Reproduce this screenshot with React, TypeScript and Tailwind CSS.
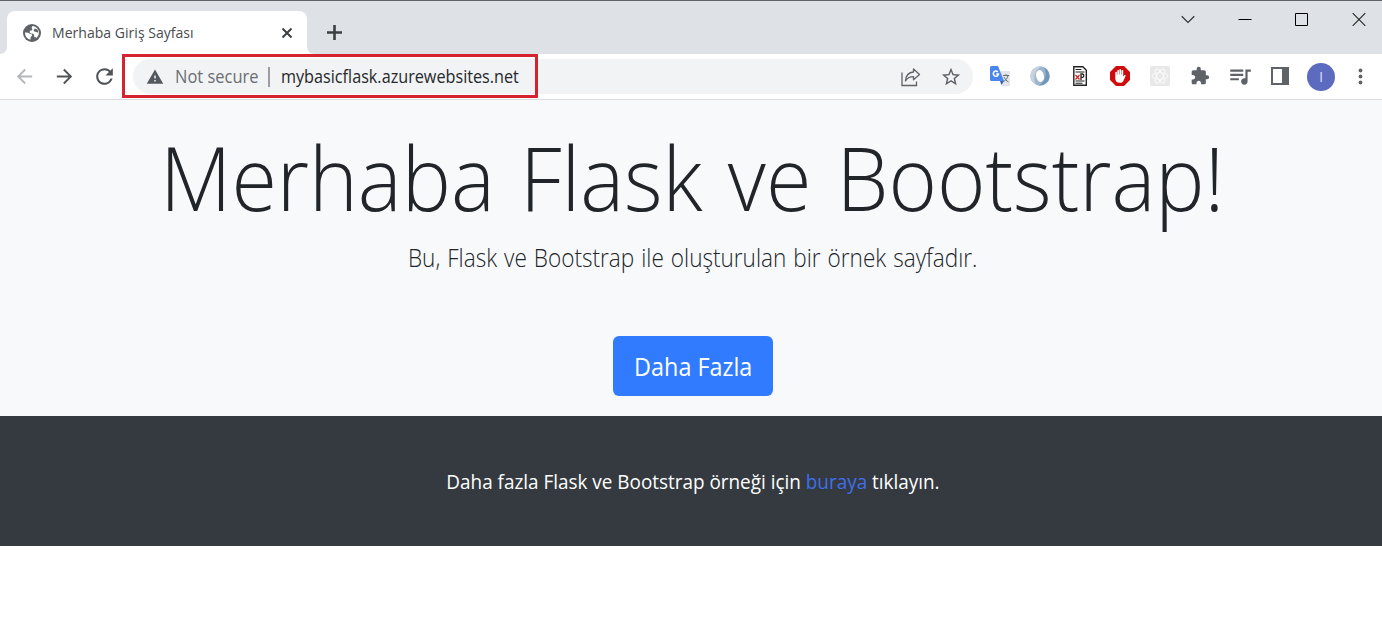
import React from 'react';
import { MdWarning, MdExtension, MdQueueMusic, MdRefresh, MdArrowBack, MdArrowForward, MdStarBorder } from 'react-icons/md';

function TabStrip() {
  return (
    <div className="flex h-[54px] shrink-0 border-t border-[#63646b] bg-[#dee1e6]">
      <svg className="mt-[45px] h-2 w-[7px] shrink-0" viewBox="0 0 7 8" fill="#fff">
        <path d="M7 0v8H0C5 8 7 4 7 0z" />
      </svg>
      <div className="mt-[10px] flex w-[300px] shrink-0 items-center rounded-t-lg bg-white pl-[16px] pr-[13px]">
        <svg className="h-[18px] w-[18px] shrink-0" viewBox="0 0 18 18">
          <circle cx="9" cy="9" r="9" fill="#5f6368" />
          <path d="M2 8.500c2-.3 3.500.1 4.500 1 .9.800 2.700.3 2.700 1.700 0 1-1.200.8-1.500 2L7.400 15.700C4 15 1.900 12 2 8.500zM9.500 2.100c3.800.4 6.400 3.300 6.500 6.500-.2 2.400-1 4-2.600 5.400-.4-.7-1.200-.7-1.900-.9-.9-.3.1-1.300-.5-2.400-.7-1.200-1.200-.9-2.800-1.200-1.500-.3-2-1.500-1.200-2.600.6-.8 2.300-.3 2.400-1.500 0-1-.9-.7-.8-1.600z" fill="#fff" />
          <path d="M11.500 4.500c1.400-.3 1.800 1 3 .9l1 3.200c-1.300.2-1.800-.9-3-.8-1.300.1-2-.8-1.700-1.700.2-.6 1-.8.7-1.600z" fill="#5f6368" />
        </svg>
        <span className="ml-[11px] origin-left scale-x-[.97] whitespace-nowrap text-[14.500px] text-[#4a4c50]">Merhaba Giriş Sayfası</span>
        <svg className="ml-auto h-[14px] w-[14px]" viewBox="0 0 14 14" stroke="#3c4043" strokeWidth="2">
          <path d="M2.500 2.500l9 9M11.500 2.500l-9 9" />
        </svg>
      </div>
      <svg className="mt-[45px] h-2 w-2 shrink-0" viewBox="0 0 8 8" fill="#fff">
        <path d="M0 0v8h8C3 8 0 5 0 0z" />
      </svg>
      <svg className="ml-[12px] mt-[24px] h-[15px] w-[15px]" viewBox="0 0 15 15" stroke="#3c4043" strokeWidth="2.600">
        <path d="M7.500 0v15M0 7.500h15" />
      </svg>
      <div className="ml-auto mr-[16px] mt-[10px] flex h-[16px] items-center gap-[43px]">
        <svg className="h-[14px] w-[14px]" viewBox="0 0 14 14" fill="none" stroke="#333" strokeWidth="1.200"><path d="M.7 4.300l6.300 6.200 6.300-6.200" /></svg>
        <svg className="h-[14px] w-[14px]" viewBox="0 0 14 14" fill="none" stroke="#000"><path d="M.5 7.500h13" /></svg>
        <svg className="h-[14px] w-[14px]" viewBox="0 0 14 14" fill="none" stroke="#000"><path d="M.5 1.500h12v12H.5z" /></svg>
        <svg className="h-[14px] w-[14px]" viewBox="0 0 14 14" fill="none" stroke="#222" strokeWidth="1.100"><path d="M.7 1.200l12.600 12.600M13.300 1.200L.7 13.800" /></svg>
      </div>
    </div>
  );
}

function Extensions() {
  return (
    <div className="ml-[17px] flex h-full items-center gap-[20px] pb-px">
      <svg className="h-5 w-5" viewBox="0 0 20 20">
        <path d="M8 5h11a1 1 0 011 1v13a1 1 0 01-1 1h-7z" fill="#e3e5e8" />
        <path d="M1.500 0H8l6 15H1.500A1.500 1.500 0 010 13.500v-12A1.500 1.500 0 011.500 0z" fill="#4b86ee" />
        <path d="M10 15h4l-2.600 4z" fill="#3a5fc0" />
        <path d="M13 9.500h6M16 8v1.500M18 9.500c-.5 3-2.500 5-4.500 6M14 11c1 2 2.500 4 4.500 5" stroke="#66707a" fill="none" />
        <path d="M7.800 5.900A2.600 2.600 0 108.500 8H6.200" stroke="#fff" strokeWidth="1.500" fill="none" />
      </svg>
      <svg className="h-5 w-5" viewBox="0 0 20 20">
        <circle cx="10" cy="10" r="9.700" fill="#9db6ce" />
        <path d="M11.500.5C4 .3.300 5 .4 10c.3 4 2.600 7 5.400 8.400C2.800 12 4.500 4 11.500.500z" fill="#c6d2de" />
        <path d="M8.500 19.500c7.500.2 11.200-4.500 11.100-9.500-.3-4-2.600-7-5.400-8.400 3 6.400 1.300 14.400-5.700 17.900z" fill="#7197bb" />
        <ellipse cx="10" cy="10" rx="3.900" ry="6" fill="#fff" transform="rotate(-12 10 10)" />
      </svg>
      <svg className="h-5 w-5" viewBox="0 0 20 20">
        <path d="M3.800.7h9l3.500 3.500v15.100H3.800z" fill="#fff" stroke="#222" strokeWidth="1.400" />
        <path d="M5.500 3.500h6M5.500 6h9M5.500 15h9M5.500 17.200h7" stroke="#222" strokeWidth="1.100" />
        <path d="M5.500 9l4 4.500M9.500 9l-4 4.500" stroke="#d02020" strokeWidth="1.200" />
        <path d="M11 14V8h1.500a1.700 1.700 0 010 3.300H11" stroke="#222" strokeWidth="1.300" fill="none" />
      </svg>
      <svg className="h-5 w-5" viewBox="0 0 20 20">
        <path d="M6 0h8l6 6v8l-6 6H6l-6-6V6z" fill="#cf0b0b" />
        <path d="M5.300 10V6.500a.8.800 0 011.600 0V9h.4V4.600a.9.900 0 011.700 0V8.500h.4V3.700a.9.900 0 011.700 0v4.800h.4v-4a.9.900 0 011.700 0v6.300l1-1.500c.6-.7 1.600-.2 1.300.6l-1.800 4.300c-.8 1.800-1.800 2.600-3.800 2.600-3 0-4.600-1.500-4.600-4.300z" fill="#fff" />
      </svg>
      <svg className="h-5 w-5" viewBox="0 0 20 20" fill="none">
        <rect width="20" height="20" rx="1.500" fill="#e8e8e8" />
        <g stroke="#f8f8f8" strokeWidth="1.100">
          <ellipse cx="10" cy="10" rx="8" ry="3.200" />
          <ellipse cx="10" cy="10" rx="8" ry="3.200" transform="rotate(60 10 10)" />
          <ellipse cx="10" cy="10" rx="8" ry="3.200" transform="rotate(120 10 10)" />
        </g>
      </svg>
      <MdExtension className="h-5 w-5 text-[#5f6368]" />
      <MdQueueMusic className="-mx-[3px] h-[26px] w-[26px] text-[#5f6368]" />
      <svg className="h-5 w-5" viewBox="0 0 20 20">
        <path d="M2 2h16v16H2z" fill="none" stroke="#5f6368" strokeWidth="2" />
        <path d="M12 2h6v16h-6z" fill="#5f6368" />
      </svg>
    </div>
  );
}

function Toolbar() {
  return (
    <div className="flex h-[46px] shrink-0 items-center border-b border-[#dadce0] bg-white">
      <MdArrowBack className="ml-[13px] h-[23px] w-[23px] shrink-0 text-[#b5b7ba]" />
      <MdArrowForward className="ml-[17px] h-[23px] w-[23px] shrink-0 text-[#505357]" />
      <MdRefresh className="ml-[16px] h-[25px] w-[25px] shrink-0 text-[#505357]" />
      <div className="relative ml-[16px] flex h-[35px] w-[840px] shrink-0 items-center rounded-full bg-[#f1f3f4] pl-[13px] pr-[13px]">
        <div className="absolute -left-[11px] -top-[5px] h-[44px] w-[416px] border-[3px] border-[#d5232f]" />
        <MdWarning className="h-[18px] w-[18px] text-[#55585c]" />
        <span className="ml-[11px] w-[84px] origin-left scale-x-[.915] whitespace-nowrap text-[18px] text-[#6b6e72]">Not secure</span>
        <span className="ml-[9px] h-[20px] w-[2px] bg-[#9b9da0]" />
        <span className="ml-[11px] w-[240px] origin-left scale-x-[.9] whitespace-nowrap text-[18px] text-[#26282b]">mybasicflask.azurewebsites.net</span>
        <svg className="ml-auto h-5 w-5" viewBox="0 0 20 20" fill="none" stroke="#5f6368" strokeWidth="1.300">
          <path d="M1 5.500v13h14.500v-4" />
          <path d="M12.500 2l6 5.500-6 5.200V9.600c-4 0-6.500 1.500-8 4.400.3-5 3.200-8.600 8-9z" strokeLinejoin="round" />
        </svg>
        <MdStarBorder className="-mr-[2px] ml-[19px] h-[22px] w-[22px] text-[#5f6368]" />
      </div>
      <Extensions />
      <div className="ml-[17px] flex h-7 w-7 shrink-0 items-center justify-center rounded-full bg-[#5c6bc0] text-[15px] text-[#d8dcf2]">I</div>
      <svg className="ml-[23px] h-[18px] w-[5px] shrink-0" viewBox="0 0 5 18" fill="#5f6368">
        <circle cx="2.500" cy="2.500" r="1.900" /><circle cx="2.500" cy="8.500" r="1.900" /><circle cx="2.500" cy="14.500" r="1.900" />
      </svg>
    </div>
  );
}

export default function App() {
  return (
    <div className="flex h-[618px] w-[1382px] flex-col overflow-hidden bg-white font-['Open_Sans','Noto_Sans',sans-serif]">
      <TabStrip />
      <Toolbar />
      <main className="flex h-[316px] shrink-0 flex-col items-center bg-[#f8f9fb] pl-[4px] text-[#212529]">
        <h1 className="mr-[2px] mt-[23px] scale-x-[.94] whitespace-nowrap text-[88px] font-light leading-[108px] [word-spacing:4px]">Merhaba Flask ve Bootstrap!</h1>
        <p className="mt-[7px] scale-x-[.902] whitespace-nowrap text-[25px] font-light leading-[38px] [word-spacing:1.3px]">Bu, Flask ve Bootstrap ile oluşturulan bir örnek sayfadır.</p>
        <button className="mt-[60px] h-[60px] w-[160px] rounded-[6px] bg-[#307bff] pt-[2px] text-[25px] text-white">
          <span className="inline-block scale-x-[.935]">Daha Fazla</span>
        </button>
      </main>
      <footer className="flex h-[130px] shrink-0 items-center justify-center bg-[#343a40] pl-[4px] pt-[2px] text-[20px] text-white">
        <p className="scale-x-[.945] whitespace-nowrap">Daha fazla Flask ve Bootstrap örneği için <a className="text-[#3f6fe8]">buraya</a> tıklayın.</p>
      </footer>
    </div>
  );
}
